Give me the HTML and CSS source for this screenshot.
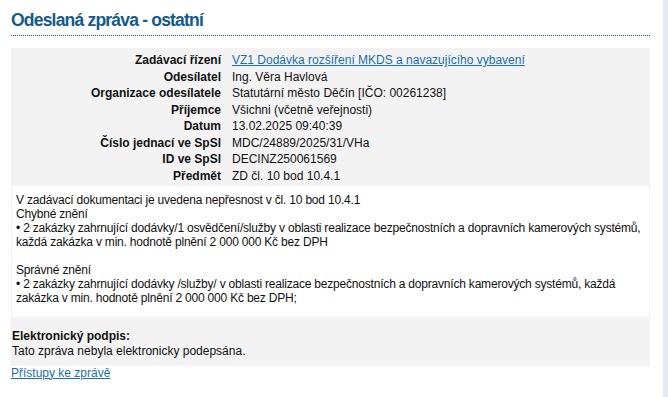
FILE: index.html
```html
<!DOCTYPE html>
<html lang="cs">
<head>
<meta charset="utf-8">
<title>Odeslaná zpráva - ostatní</title>
<link rel="stylesheet" href="styles.css">
</head>
<body>
<div class="layout">
  <main class="main">
    <h1 class="title">Odeslaná zpráva - ostatní</h1>
    <section class="message">
      <div class="meta">
        <div class="label">Zadávací řízení</div><div class="value"><a href="#">VZ1 Dodávka rozšíření MKDS a navazujícího vybavení</a></div>
        <div class="label">Odesílatel</div><div class="value">Ing. Věra Havlová</div>
        <div class="label">Organizace odesílatele</div><div class="value">Statutární město Děčín [IČO: 00261238]</div>
        <div class="label">Příjemce</div><div class="value">Všichni (včetně veřejnosti)</div>
        <div class="label">Datum</div><div class="value">13.02.2025 09:40:39</div>
        <div class="label">Číslo jednací ve SpSl</div><div class="value">MDC/24889/2025/31/VHa</div>
        <div class="label">ID ve SpSl</div><div class="value">DECINZ250061569</div>
        <div class="label">Předmět</div><div class="value">ZD čl. 10 bod 10.4.1</div>
      </div>
      <div class="body">V zadávací dokumentaci je uvedena nepřesnost v čl. 10 bod 10.4.1<br>Chybné znění<br>• 2 zakázky zahrnující dodávky/1 osvědčení/služby v oblasti realizace bezpečnostních a dopravních kamerových systémů, každá zakázka v min. hodnotě plnění 2 000 000 Kč bez DPH<br><br>Správné znění<br>• 2 zakázky zahrnující dodávky /služby/ v oblasti realizace bezpečnostních a dopravních kamerových systémů, každá zakázka v min. hodnotě plnění 2 000 000 Kč bez DPH;</div>
      <div class="signature">
        <div class="sig-title">Elektronický podpis:</div>
        <div>Tato zpráva nebyla elektronicky podepsána.</div>
      </div>
    </section>
    <a class="access" href="#">Přístupy ke zprávě</a>
  </main>
  <aside class="side"></aside>
</div>
</body>
</html>
```
FILE: styles.css
```css
html, body {
  margin: 0;
  padding: 0;
  background: #fff;
}
body {
  font-family: "Liberation Sans", Arial, sans-serif;
  font-size: 12px;
  color: #111;
}
.layout {
  display: flex;
  min-height: 397px;
}
.main {
  flex: 1;
  margin: 0 13px 0 11px;
}
.side {
  width: 5px;
  background: #e4eaf4;
}
.title {
  margin: 0;
  padding: 9px 0 4px;
  font-family: "Liberation Sans", Arial, sans-serif;
  font-size: 17.5px;
  letter-spacing: -0.8px;
  font-weight: bold;
  line-height: 22px;
  color: #135a8c;
  border-bottom: 1px dotted #135a8c;
}
.message {
  margin-top: 12px;
  background: #f3f3f3;
}
.meta {
  display: grid;
  grid-template-columns: 210px 1fr;
  column-gap: 11px;
  padding: 4px 0 1px;
  line-height: 16.57px;
}
.label {
  text-align: right;
  font-weight: bold;
}
.value a, .access {
  color: #1a6faf;
}
.body {
  margin: 0 1px;
  background: #fff;
  padding: 7px 4px 12px;
  line-height: 14px;
  letter-spacing: -0.2px;
}
.signature {
  padding: 12px 1px 7px;
  line-height: 15px;
}
.sig-title {
  font-weight: bold;
}
.access {
  display: inline-block;
  line-height: 15px;
}
```
